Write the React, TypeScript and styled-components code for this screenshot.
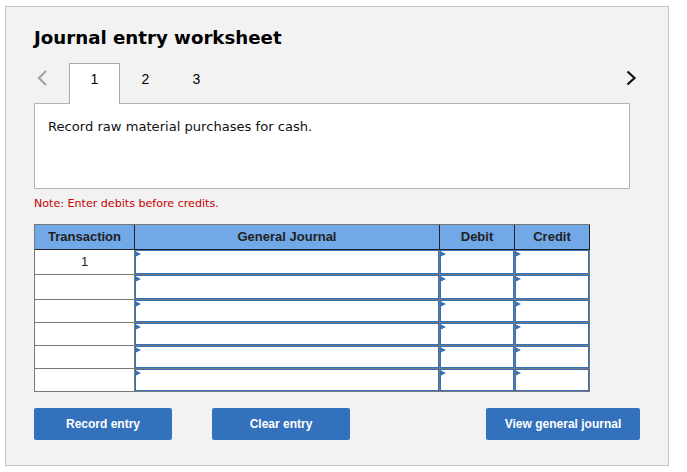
import React from 'react';
import styled, { createGlobalStyle } from 'styled-components';

const GlobalStyle = createGlobalStyle`
  html, body {
    margin: 0;
    padding: 0;
    background: #fff;
  }
`;

const Panel = styled.div`
  box-sizing: border-box;
  width: 664px;
  height: 460px;
  margin: 6px 0 0 5px;
  padding: 20px 28px 0 28px;
  background: #f2f2f2;
  border: 1px solid #c4c4c4;
  font-family: 'DejaVu Sans', Verdana, sans-serif;
`;

const Title = styled.h1`
  margin: 0;
  font-size: 18.2px;
  line-height: 22px;
  font-weight: 700;
  color: #000;
`;

const TabBar = styled.div`
  display: flex;
  align-items: flex-start;
  height: 40px;
  margin-top: 14px;
  position: relative;
  z-index: 1;
`;

const Arrow = styled.button<{ $muted?: boolean }>`
  display: flex;
  align-items: center;
  justify-content: center;
  width: 16px;
  height: 30px;
  padding: 0;
  border: none;
  background: none;
  color: ${(p) => (p.$muted ? '#a3a3a3' : '#111')};
`;

const PrevArrow = styled(Arrow)`
  margin-right: 19px;
`;

const NextArrow = styled(Arrow)`
  margin-left: auto;
  margin-right: 1px;
`;

const Tab = styled.div<{ $active?: boolean }>`
  box-sizing: border-box;
  width: 51px;
  height: 41px;
  padding-top: 7px;
  text-align: center;
  font-family: 'Liberation Sans', Arial, sans-serif;
  font-size: 14px;
  line-height: 16px;
  color: #000;
  background: ${(p) => (p.$active ? '#fff' : 'transparent')};
  border: 1px solid ${(p) => (p.$active ? '#a8a8a8' : 'transparent')};
  border-bottom: none;
`;

const Prompt = styled.div`
  box-sizing: border-box;
  width: 596px;
  height: 86px;
  padding: 14px 13px;
  background: #fff;
  border: 1px solid #b4b4b4;
  font-size: 13.1px;
  line-height: 18px;
  color: #111;
`;

const Note = styled.p`
  margin: 8px 0 0;
  font-size: 11.1px;
  line-height: 14px;
  color: #c80000;
`;

const Sheet = styled.table`
  width: 556px;
  margin-top: 13px;
  table-layout: fixed;
  border-collapse: separate;
  border-spacing: 0;
  border-top: 1px solid #777;
  border-left: 1px solid #777;
  font-family: 'Liberation Sans', Arial, sans-serif;
`;

const HeadCell = styled.th`
  box-sizing: border-box;
  height: 25px;
  padding: 0 0 2px;
  background: #71a8e8;
  border-right: 1px solid #222;
  border-bottom: 1px solid #222;
  font-size: 13px;
  font-weight: 700;
  color: #222;
  text-align: center;
  vertical-align: middle;
`;

const Row = styled.tr<{ $height: number }>`
  height: ${(p) => p.$height}px;
`;

const TxCell = styled.td`
  box-sizing: border-box;
  padding: 0 0 2px;
  background: #fff;
  border-right: 1px solid #777;
  border-bottom: 1px solid #777;
  font-size: 13px;
  color: #222;
  text-align: center;
  vertical-align: middle;
`;

const EntryCell = styled.td`
  box-sizing: border-box;
  position: relative;
  padding: 0;
  background: #fff;
  border-right: 1px solid #777;
  border-bottom: 1px solid #777;
  box-shadow: inset 0 0 0 1px #3371bc;

  &::before {
    content: '';
    position: absolute;
    top: 1px;
    left: 0;
    border-left: 6px solid #3371bc;
    border-top: 3.5px solid transparent;
    border-bottom: 3.5px solid transparent;
  }
`;

const ButtonRow = styled.div`
  display: flex;
  margin-top: 16px;
`;

const ActionButton = styled.button<{ $width: number }>`
  width: ${(p) => p.$width}px;
  height: 32px;
  padding: 0;
  border: none;
  border-radius: 2px;
  background: #3371bc;
  color: #fff;
  font-family: 'Liberation Sans', Arial, sans-serif;
  font-size: 12px;
  font-weight: 700;
`;

const ClearButton = styled(ActionButton)`
  margin-left: 40px;
`;

const ViewButton = styled(ActionButton)`
  margin-left: auto;
`;

const Chevron = ({ dir }: { dir: 'left' | 'right' }) => (
  <svg width="12" height="18" viewBox="0 0 12 18" fill="none">
    <path
      d={dir === 'left' ? 'M10 2 L3 9 L10 16' : 'M2.5 2.5 L9.5 9 L2.5 15.5'}
      stroke="currentColor"
      strokeWidth="2.2"
    />
  </svg>
);

const rowHeights = [25, 25, 23, 23, 23, 23];

const App: React.FC = () => {
  return (
    <Panel>
      <GlobalStyle />
      <Title>Journal entry worksheet</Title>
      <TabBar>
        <PrevArrow $muted>
          <Chevron dir="left" />
        </PrevArrow>
        <Tab $active>1</Tab>
        <Tab>2</Tab>
        <Tab>3</Tab>
        <NextArrow>
          <Chevron dir="right" />
        </NextArrow>
      </TabBar>
      <Prompt>Record raw material purchases for cash.</Prompt>
      <Note>Note: Enter debits before credits.</Note>
      <Sheet>
        <colgroup>
          <col style={{ width: 100 }} />
          <col style={{ width: 305 }} />
          <col style={{ width: 75 }} />
          <col style={{ width: 75 }} />
        </colgroup>
        <thead>
          <tr>
            <HeadCell>Transaction</HeadCell>
            <HeadCell>General Journal</HeadCell>
            <HeadCell>Debit</HeadCell>
            <HeadCell>Credit</HeadCell>
          </tr>
        </thead>
        <tbody>
          {rowHeights.map((height, i) => (
            <Row key={i} $height={height}>
              <TxCell>{i === 0 ? '1' : ''}</TxCell>
              <EntryCell />
              <EntryCell />
              <EntryCell />
            </Row>
          ))}
        </tbody>
      </Sheet>
      <ButtonRow>
        <ActionButton $width={138}>Record entry</ActionButton>
        <ClearButton $width={138}>Clear entry</ClearButton>
        <ViewButton $width={154}>View general journal</ViewButton>
      </ButtonRow>
    </Panel>
  );
};

export default App;
